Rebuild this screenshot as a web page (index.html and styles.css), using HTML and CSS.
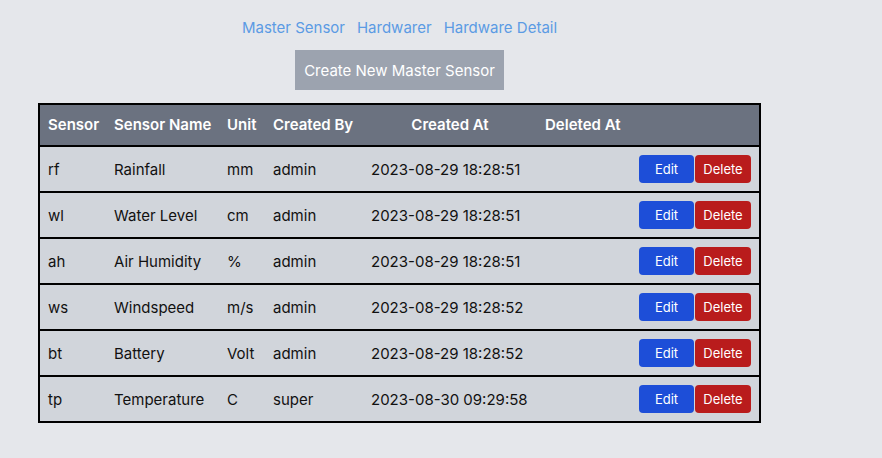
FILE: index.html
```html
<!DOCTYPE html>
<html>
<head>
<meta charset="utf-8">
<link rel="stylesheet" href="styles.css">
</head>
<body>
<div class="wrap">
  <nav class="nav">
    <a href="#">Master Sensor</a>
    <a href="#">Hardwarer</a>
    <a href="#">Hardware Detail</a>
  </nav>
  <div class="actions">
    <button class="create">Create New Master Sensor</button>
  </div>
  <table class="grid">
    <colgroup>
      <col style="width:66px"><col style="width:113px"><col style="width:46px"><col style="width:98px"><col style="width:174px"><col style="width:94px"><col style="width:128px">
    </colgroup>
    <thead>
      <tr><th>Sensor</th><th>Sensor Name</th><th>Unit</th><th>Created By</th><th class="center">Created At</th><th>Deleted At</th><th></th></tr>
    </thead>
    <tbody>
      <tr><td>rf</td><td>Rainfall</td><td>mm</td><td>admin</td><td>2023-08-29 18:28:51</td><td></td><td class="btns"><button class="edit">Edit</button><button class="del">Delete</button></td></tr>
      <tr><td>wl</td><td>Water Level</td><td>cm</td><td>admin</td><td>2023-08-29 18:28:51</td><td></td><td class="btns"><button class="edit">Edit</button><button class="del">Delete</button></td></tr>
      <tr><td>ah</td><td>Air Humidity</td><td>%</td><td>admin</td><td>2023-08-29 18:28:51</td><td></td><td class="btns"><button class="edit">Edit</button><button class="del">Delete</button></td></tr>
      <tr><td>ws</td><td>Windspeed</td><td>m/s</td><td>admin</td><td>2023-08-29 18:28:52</td><td></td><td class="btns"><button class="edit">Edit</button><button class="del">Delete</button></td></tr>
      <tr><td>bt</td><td>Battery</td><td>Volt</td><td>admin</td><td>2023-08-29 18:28:52</td><td></td><td class="btns"><button class="edit">Edit</button><button class="del">Delete</button></td></tr>
      <tr><td>tp</td><td>Temperature</td><td>C</td><td>super</td><td>2023-08-30 09:29:58</td><td></td><td class="btns"><button class="edit">Edit</button><button class="del">Delete</button></td></tr>
    </tbody>
  </table>
</div>
</body>
</html>
```
FILE: styles.css
```css
html, body { margin: 0; padding: 0; }
body {
  background: #e5e7eb;
  font-family: Inter, "Noto Sans", sans-serif;
  color: #111;
}
.wrap {
  width: 723px;
  margin-left: 38px;
  padding-top: 17px;
}
.nav {
  display: flex;
  justify-content: center;
  gap: 12px;
  height: 20px;
  align-items: center;
  padding-top: 1px;
}
.nav a {
  color: #5b9be4;
  text-decoration: none;
  font-size: 15px;
  line-height: 20px;
}
.actions {
  display: flex;
  justify-content: center;
  margin-top: 12px;
}
.create {
  background: #9ca3af;
  color: #fff;
  border: 0;
  height: 40px;
  padding: 0 9px;
  font-family: inherit;
  font-size: 15px;
}
.grid {
  margin-top: 13px;
  width: 723px;
  table-layout: fixed;
  border-collapse: separate;
  border-spacing: 0;
  border: 2px solid #000;
  font-size: 15px;
}
.grid th {
  background: #6b7280;
  color: #fff;
  font-weight: 600;
  text-align: left;
  height: 40px;
  padding: 0 8px 2px;
  box-sizing: border-box;
  white-space: nowrap;
}
.grid th.center { text-align: center; }
.grid td {
  background: #d1d5db;
  border-top: 2px solid #000;
  height: 46px;
  padding: 0 8px;
  box-sizing: border-box;
  white-space: nowrap;
}
.btns { font-size: 0; }
.btns button {
  height: 28px;
  border: 0;
  color: #fff;
  font-family: inherit;
  font-size: 13px;
  border-radius: 4px;
  vertical-align: middle;
}
.edit { background: #1d4ed8; width: 55px; margin-right: 1px; }
.del { background: #b91c1c; width: 56px; }
```
